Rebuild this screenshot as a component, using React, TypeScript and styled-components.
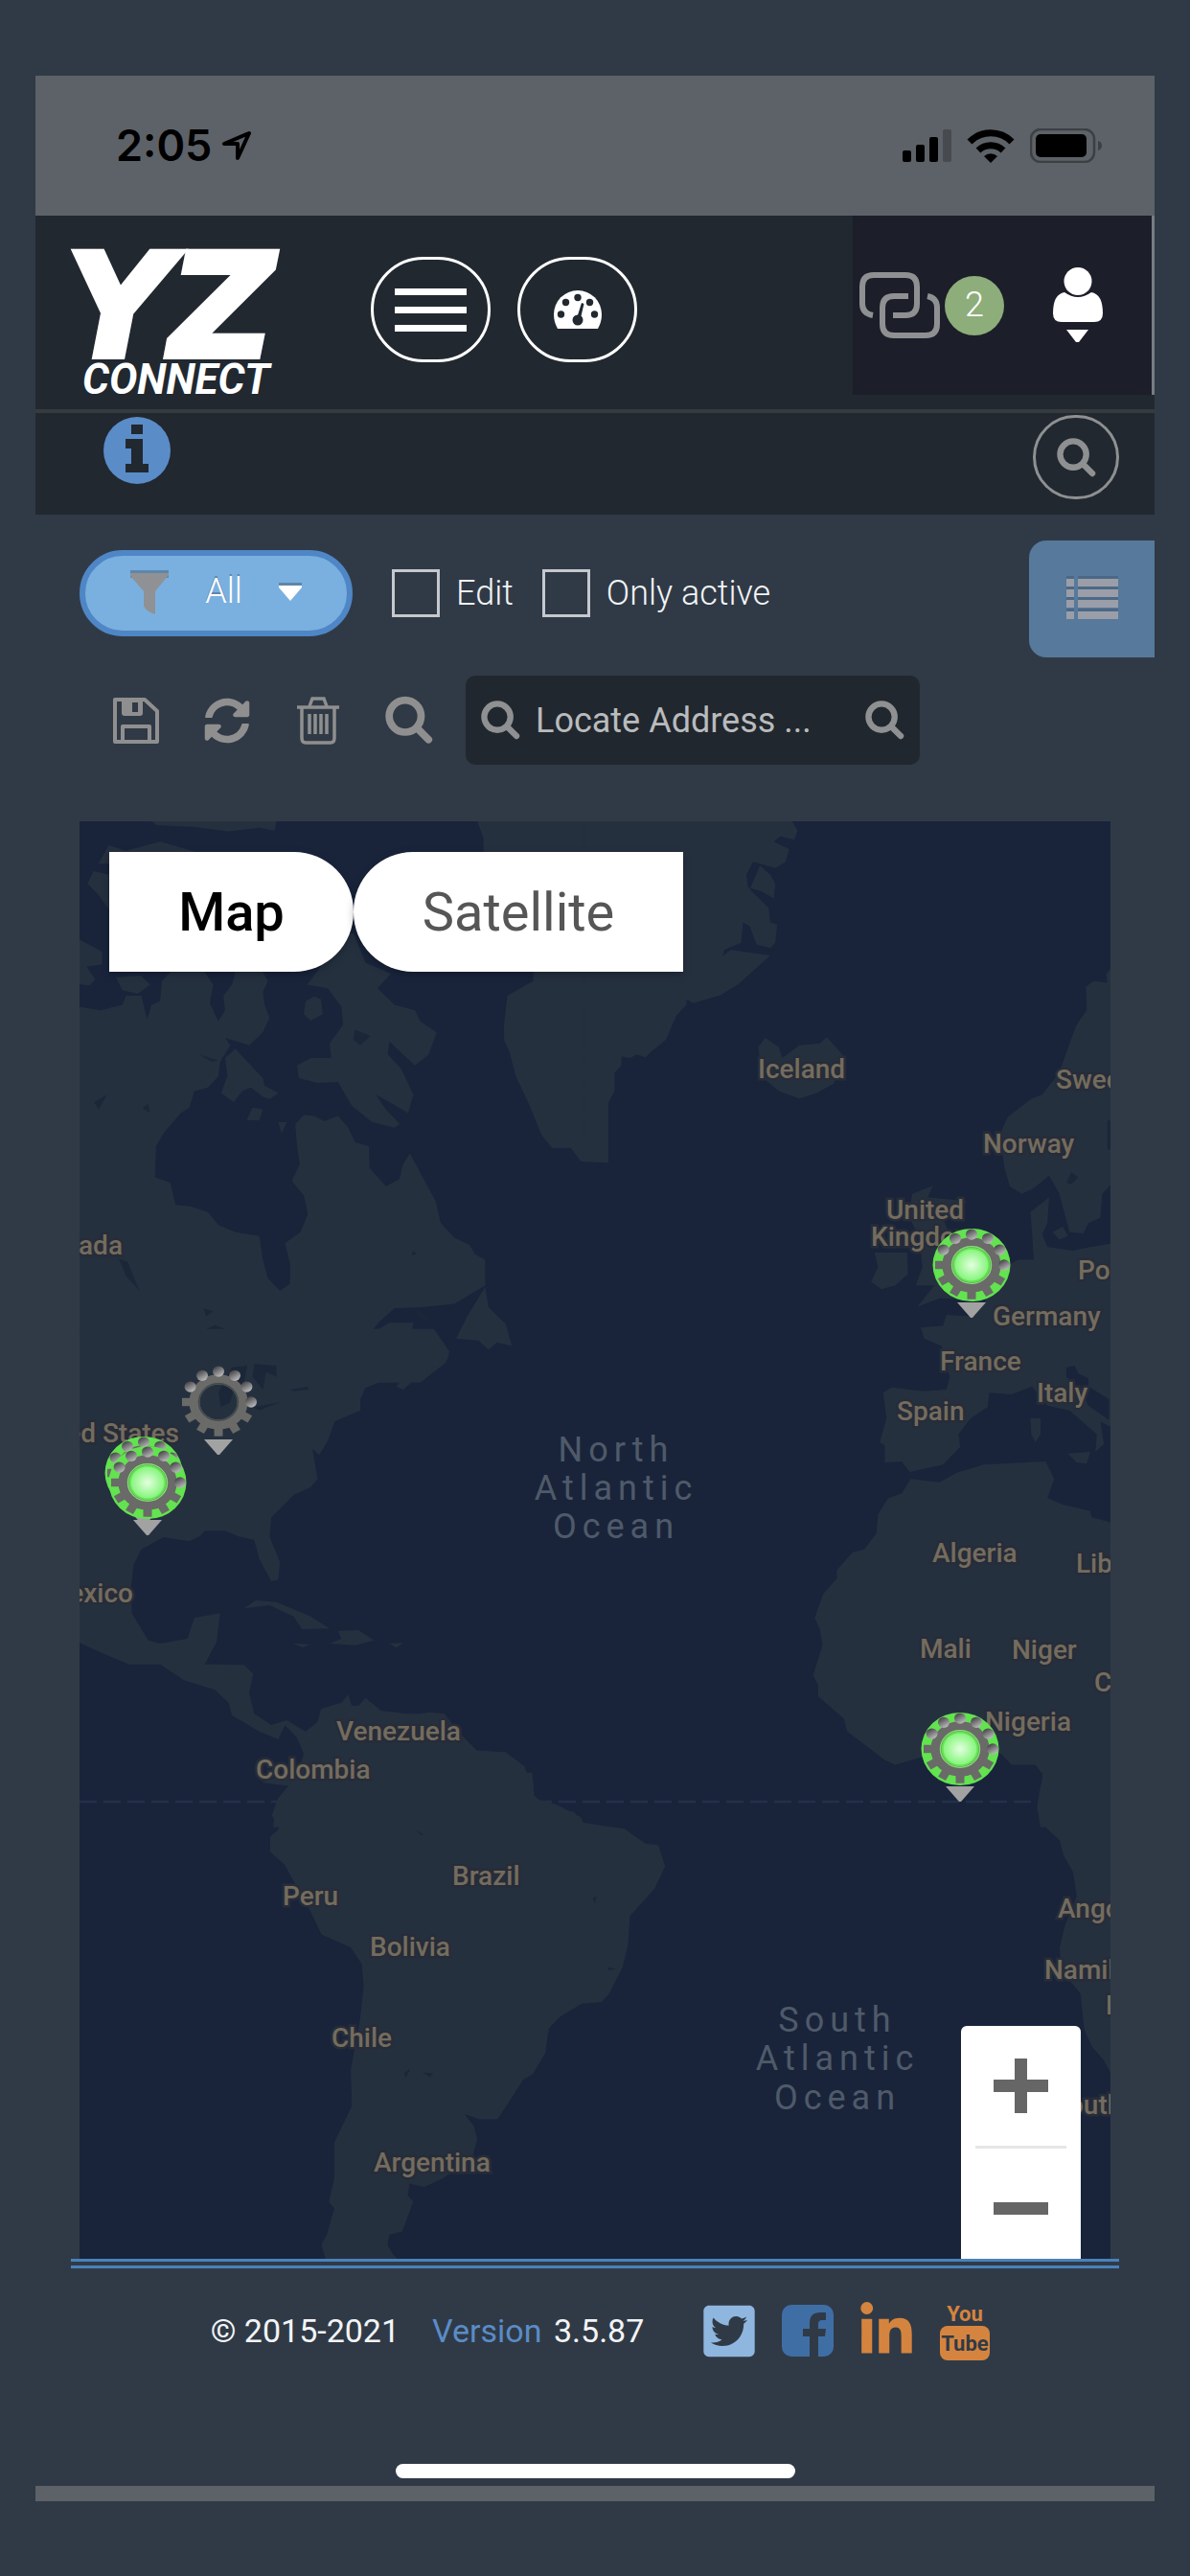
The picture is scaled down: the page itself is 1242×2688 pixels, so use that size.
import React from "react";
import styled, { createGlobalStyle } from "styled-components";
import { FaSyncAlt, FaTwitterSquare, FaLinkedinIn } from "react-icons/fa";

const color = {
  page: "#303a46",
  status: "#5d6268",
  bar: "#212830",
  account: "#1c1e29",
  muted: "#8e9092",
  water: "#19243b",
  land: "#25303f",
  label: "#746c5d",
  blue: "#4f86c6",
};

const GlobalStyle = createGlobalStyle`
  * { box-sizing: border-box; }
  body { margin: 0; background: ${color.page}; }
  button, input, select { font: inherit; color: inherit; }
  svg { display: block; }
`;

const Page = styled.div`
  min-height: 100vh;
  padding: 79px 37px 78px;
  background: ${color.page};
  color: #f2f4f6;
  font-family: Roboto, "Liberation Sans", sans-serif;
  font-weight: 300;
  font-size: 36px;
  line-height: 42px;
`;

const PlainButton = styled.button`
  display: flex;
  align-items: center;
  justify-content: center;
  flex: none;
  padding: 0;
  border: 0;
  background: none;
  cursor: pointer;
`;

/* Phone status bar */
const StatusBar = styled.div`
  display: flex;
  align-items: center;
  height: 146px;
  padding: 0 54px 0 84px;
  background: ${color.status};
  color: #000;
`;

const Clock = styled.time`
  font-family: Inter, sans-serif;
  font-weight: 600;
  font-size: 45px;
  line-height: 56px;
  margin-right: 10px;
`;

const StatusIcons = styled.div`
  display: flex;
  align-items: center;
  gap: 16px;
  margin-left: auto;
`;

/* Header */
const Header = styled.header`
  display: flex;
  align-items: center;
  height: 206px;
  padding: 0 0 6px 29px;
  background: ${color.bar};
  border-bottom: 4px solid #363b3d;
`;

const LogoLink = styled.a`
  margin-right: 80px;
`;

const LogoSvg = styled.svg`
  overflow: visible;
`;

const Nav = styled.nav`
  display: flex;
  gap: 28px;
`;

const RoundButton = styled(PlainButton)`
  width: 125px;
  height: 110px;
  border: 3px solid #fff;
  border-radius: 55px;
  color: #fff;
`;

const Account = styled.div`
  display: flex;
  align-items: center;
  align-self: flex-start;
  height: 187px;
  margin-left: auto;
  padding: 0 51px 0 7px;
  background: ${color.account};
  border-right: 3px solid #777c82;
`;

const LinksButton = styled(PlainButton)`
  gap: 4px;
  margin-right: 51px;
`;

const Badge = styled.span`
  width: 62px;
  height: 62px;
  border-radius: 31px;
  background: #8dad7a;
  color: #fff;
  line-height: 60px;
  text-align: center;
`;

const SubBar = styled.div`
  display: flex;
  justify-content: space-between;
  align-items: flex-start;
  height: 106px;
  padding: 2px 37px 0 71px;
  background: ${color.bar};
`;

const CircleButton = styled(PlainButton)`
  width: 90px;
  height: 88px;
  border: 3px solid ${color.muted};
  border-radius: 45px;
  color: ${color.muted};
`;

/* Controls above the map */
const FilterRow = styled.div`
  display: flex;
  align-items: flex-start;
  padding: 27px 0 0 46px;
`;

const Filters = styled.div`
  display: flex;
  align-items: center;
  padding-top: 10px;
`;

const FilterPill = styled.label`
  display: flex;
  align-items: center;
  width: 285px;
  height: 90px;
  margin-right: 41px;
  padding: 0 47px;
  border: 6px solid ${color.blue};
  border-radius: 45px;
  background: #7ab0df;
`;

const FilterSelect = styled.select`
  appearance: none;
  flex: 1;
  min-width: 0;
  padding: 0 0 4px;
  border: 0;
  background: none;
  color: #fff;
  text-align: center;
  text-shadow: 0 -2px 0 #5f86ab;
`;

const Check = styled.label`
  display: flex;
  align-items: center;
  gap: 17px;
  margin-right: 30px;
`;

const Box = styled.input`
  appearance: none;
  width: 50px;
  height: 50px;
  margin: 0;
  border: 3px solid #c5c8cd;
`;

const ListButton = styled(PlainButton)`
  width: 131px;
  height: 122px;
  margin-left: auto;
  border-radius: 18px 0 0 18px;
  background: #57799b;
`;

const ToolRow = styled.div`
  display: flex;
  align-items: center;
  padding: 19px 46px 0 80px;
`;

const Tools = styled.div`
  display: flex;
  gap: 45px;
  margin-right: 34px;
  color: #8f8f8f;
`;

const ToolButton = styled(PlainButton)`
  width: 50px;
  height: 52px;
`;

const AddressBox = styled.form`
  display: flex;
  align-items: center;
  width: 474px;
  height: 93px;
  padding: 0 16px;
  border-radius: 10px;
  background: #21272e;
  color: ${color.muted};
`;

const AddressInput = styled.input`
  flex: 1;
  min-width: 0;
  padding: 0 0 0 16px;
  border: 0;
  background: none;
  color: #b9bbbd;
  font-weight: 400;
  &::placeholder { color: #b9bbbd; opacity: 1; }
`;

/* Map */
const MapFrame = styled.main`
  position: relative;
  overflow: hidden;
  aspect-ratio: 1076 / 1500;
  margin: 59px 46px 0;
  background: ${color.water};
`;

const MapSvg = styled.svg`
  width: 100%;
  height: 100%;
`;

const MapTypes = styled.div`
  position: absolute;
  top: 32px;
  left: 31px;
  display: flex;
`;

const MapType = styled.button<{ $active?: boolean }>`
  width: ${(p) => (p.$active ? "255px" : "344px")};
  height: 125px;
  padding: 0;
  border: 0;
  border-radius: ${(p) => (p.$active ? "0 62px 62px 0" : "62px 0 0 62px")};
  background: #fff;
  box-shadow: 0 3px 8px rgba(0, 0, 0, 0.25);
  color: ${(p) => (p.$active ? "#000" : "#565656")};
  font-size: 56px;
  font-weight: ${(p) => (p.$active ? 500 : 400)};
`;

const ZoomPanel = styled.div`
  position: absolute;
  right: 31px;
  bottom: -10px;
  width: 125px;
  border-radius: 6px;
  background: #fff;
`;

const ZoomButton = styled(PlainButton)`
  width: 100%;
  height: 125px;
  color: #666;
`;

const ZoomDivider = styled.div`
  height: 3px;
  margin: 0 15px;
  background: #e6e6e6;
`;

const CountryLabel = styled.text`
  font-size: 28px;
  font-weight: 500;
  fill: ${color.label};
  stroke: #272c39;
  stroke-width: 5px;
  paint-order: stroke;
`;

const OceanLabel = styled.text`
  font-size: 36px;
  font-weight: 400;
  letter-spacing: 6px;
  fill: #4f5a69;
  text-anchor: middle;
`;

/* Footer */
const Footer = styled.footer`
  display: flex;
  justify-content: center;
  align-items: center;
  height: 140px;
  margin: 0 37px;
  padding-left: 12px;
  border-top: 10px double #4a82bb;
  font-size: 34px;
  font-weight: 400;
`;

const Copyright = styled.span`
  margin-right: 34px;
`;

const Version = styled.span`
  margin-right: 62px;
  b { font-weight: 400; color: #5a8cc8; margin-right: 4px; }
`;

const Social = styled.div`
  display: flex;
  align-items: center;
  gap: 28px;
`;

const SocialLink = styled.a<{ $tint: string }>`
  display: flex;
  justify-content: center;
  width: 54px;
  color: ${(p) => p.$tint};
`;

const HomeBar = styled.div`
  width: 417px;
  height: 15px;
  margin: 74px auto 8px;
  border-radius: 8px;
  background: #fff;
`;

const BottomStrip = styled.div`
  height: 16px;
  background: ${color.status};
`;

function SearchIcon({ size = 41 }: { size?: number }) {
  return (
    <svg width={size} height={size} viewBox="0 0 42 42" fill="none" stroke="currentColor" aria-hidden="true">
      <ellipse cx="17.5" cy="17.5" rx="14" ry="14" strokeWidth="6.5" />
      <path d="M28 28 38 38" strokeWidth="6.5" strokeLinecap="round" />
    </svg>
  );
}

function Logo() {
  return (
    <LogoSvg width="241" height="180" viewBox="66 233 241 180" fill="#fff" role="img" aria-label="YZ Connect">
      <text x="69" y="372" fontFamily="'DejaVu Sans', sans-serif" fontWeight="700" fontStyle="oblique" fontSize="150" stroke="#fff" strokeWidth="6">YZ</text>
      <text x="86" y="411" fontFamily="Roboto, sans-serif" fontWeight="700" fontStyle="italic" fontSize="44">CONNECT</text>
    </LogoSvg>
  );
}

function Pin({ x, y, active = false }: { x: number; y: number; active?: boolean }) {
  const teeth = [30, 60, 90, 120, 150, 180];
  const beads = [210, 240, 270, 300, 330, 360];
  return (
    <g transform={`translate(${x} ${y})`}>
      <g transform="scale(1 .94)">
        {active && <circle r="40.5" fill="#62e34f" />}
        <circle r="25" fill="none" stroke="#6a6a68" strokeWidth="11" />
        {teeth.map((a) => (
          <rect key={a} x="27" y="-4.5" width="11" height="9" fill="#6a6a68" transform={`rotate(${a})`} />
        ))}
        {beads.map((a) => (
          <circle
            key={a}
            cx={34 * Math.cos((a * Math.PI) / 180)}
            cy={34 * Math.sin((a * Math.PI) / 180)}
            r="6"
            fill="url(#bead)"
          />
        ))}
        <circle r="20.5" fill="none" stroke={active ? "#7fe070" : "#3e4a4a"} strokeWidth="1.5" />
        {active && <circle r="17.5" fill="url(#lamp)" />}
      </g>
      <path d="M-15 39H15L1 55H-1Z" fill="#a2a2a2" />
    </g>
  );
}

const countries: [string, number, number][] = [
  ["Iceland", 791, 1125], ["Sweden", 1102, 1136], ["Norway", 1026, 1203], ["United", 925, 1272],
  ["Kingdom", 909, 1300], ["Poland", 1125, 1335], ["Germany", 1036, 1383], ["France", 981, 1430],
  ["Italy", 1082, 1463], ["Spain", 936, 1482], ["Algeria", 973, 1630], ["Libya", 1123, 1641],
  ["Mali", 960, 1730], ["Niger", 1056, 1731], ["Chad", 1142, 1765], ["Nigeria", 1028, 1806],
  ["Venezuela", 351, 1816], ["Colombia", 267, 1856], ["Peru", 295, 1988], ["Brazil", 472, 1967],
  ["Bolivia", 386, 2041], ["Chile", 346, 2136], ["Argentina", 390, 2266], ["Angola", 1104, 2001],
  ["Namibia", 1090, 2065], ["Botswana", 1154, 2102], ["South", 1098, 2206],
];

const edgeCountries: [string, number, number][] = [
  ["Canada", 128, 1309], ["United States", 187, 1505], ["Mexico", 139, 1672],
];

function WorldMap() {
  return (
    <MapSvg viewBox="83 857 1076 1500" preserveAspectRatio="xMidYMid slice" role="img" aria-label="World map">
      <defs>
        <linearGradient id="bead" x1="0" y1="0" x2=".6" y2="1">
          <stop offset=".2" stopColor="#4c4c4e" />
          <stop offset="1" stopColor="#b8b8ba" />
        </linearGradient>
        <radialGradient id="lamp">
          <stop offset="0" stopColor="#e4ffe0" />
          <stop offset="1" stopColor="#86f57c" />
        </radialGradient>
      </defs>
      <path d="M83 1880H1090" stroke="#24304a" strokeWidth="2.5" strokeDasharray="18 7" />
      <g fill={color.land}>
        {/* North America, Arctic islands */}
        <g transform="translate(60 840) scale(.3571 .3827)">
          <path d="M60 550 125 560 190 545 200 520 245 520 262 585 275 545 300 535 305 480 330 455 430 455 455 490 445 540 470 590 490 560 485 520 510 490 520 455 600 455 615 480 600 510 605 545 620 580 600 620 560 655 490 635 505 655 475 700 470 740 440 770 400 780 385 825 360 840 310 895 288 930 285 1015 330 1030 345 1090 390 1095 440 1110 470 1145 520 1165 590 1175 600 1240 615 1290 650 1325 680 1305 680 1250 665 1195 710 1165 732 1115 720 1065 685 1025 708 980 700 930 695 870 720 845 750 848 780 862 820 848 850 880 870 920 910 930 912 990 960 1040 1000 1020 1010 980 1030 950 1070 1020 1105 1080 1120 1140 1160 1180 1205 1200 1220 1225 1250 1240 1250 1310 1160 1360 1060 1370 985 1372 940 1410 910 1445 970 1412 1040 1412 1025 1480 1035 1520 1080 1510 1140 1490 1135 1520 1060 1575H60Z" />
          <path d="M1250 1315 1260 1370 1310 1415 1328 1475 1285 1465 1260 1485 1230 1460 1165 1455 1200 1390Z" />
          <path d="M730 490 770 440 800 350 865 350 900 430 975 460 935 500 985 545 1045 560 1060 590 1108 620 1085 680 1045 710 1010 680 970 645 965 680 1005 720 1040 790 1025 840 980 815 930 790 960 830 1000 870 985 880 920 865 860 820 820 755 760 758 705 745 700 710 740 690 800 690 795 650 835 600 830 550 790 500Z" />
          <path d="M520 665 560 705 600 745 605 765 645 785 620 802 600 795 565 770 540 780 515 810 478 785 497 740 490 690ZM570 825 600 830 590 860 553 860ZM725 535 750 522 770 530 775 570 740 588 720 570ZM645 865 670 865 655 895Z" />
          <path d="M270 40H640L635 70 590 62 500 72 400 60 290 55ZM60 365 130 400 130 435 85 440 110 475 95 492 60 488ZM170 470 245 465 270 490 235 515 190 505ZM88 215 105 180 150 190V285L120 245ZM120 160 150 110 200 125 300 100 400 127V160Z" />
          <path d="M1225 40H1610V975L1530 972 1500 935 1445 935 1415 900 1380 820 1340 740 1320 670 1305 640 1305 600 1315 520 1390 480 1400 300 1245 127 1245 90Z" />
          <g fill="#1b2738">
            <path d="M365 1475 410 1440 460 1418 520 1440 535 1480 490 1497 430 1470ZM500 1525 560 1515 640 1530 640 1568H590L575 1530ZM180 1238 205 1245 240 1325 200 1285ZM107 810 145 790 120 830ZM868 612 915 630 885 655 865 640ZM427 1372 455 1380 435 1395ZM1040 1370 1100 1408 1060 1400ZM1040 1215 1050 1225 1035 1228ZM248 825 265 815 270 840ZM415 680 470 697 450 700Z" />
          </g>
        </g>
        {/* Greenland coast, Iceland, Northern Europe */}
        <g transform="translate(620 840) scale(.3571 .3827)">
          <path d="M-30 40H575L595 70 585 95 545 85 525 100 570 120 560 155 530 172 465 155 445 190 450 225 490 235 525 255 530 215 515 190 485 165 455 230 510 280 515 320 535 325 530 375 515 390 475 380 455 330 435 320 430 375 380 395 375 412 400 395 515 410 420 490 370 518 290 540 270 530V545L240 575 210 640 170 670 150 688 125 680 105 690 80 685 80 710 60 730 60 780 20 850 15 905 0 945-30 970Z" />
          <path d="M480 660 500 635 540 660 550 690 600 655 660 650 680 633 735 690 700 760 650 785 600 800 540 780 490 740Z" />
          <path d="M1515 440 1497 460 1500 485 1460 480 1438 495 1440 560 1410 600 1390 650 1360 730 1310 790 1280 800 1210 850 1185 900 1200 990 1215 1040 1250 1060 1285 1045 1330 1010 1360 1060 1390 1165 1430 1168 1445 1140 1480 1125 1485 1060 1515 1030Z" />
          <path d="M1275 1110 1330 1070 1325 1140 1310 1170 1325 1205 1400 1215 1450 1205 1515 1195V1575H1050L1015 1475 965 1455 955 1425 1020 1420 1030 1390 1110 1395 1160 1330 1200 1260 1240 1240 1285 1240 1280 1160ZM1340 1165 1370 1150 1385 1175 1360 1185Z" />
          <path d="M930 1060 990 1038 975 1070 1090 1080 1020 1130 1050 1190 1100 1230 1140 1300 1100 1350 1010 1345 945 1368 995 1310 940 1310 960 1260 950 1180 920 1120ZM820 1220H915L917 1280 880 1310 840 1320 810 1300 830 1260Z" />
          <path fill="#1b2738" d="M1395 1000 1415 1015 1395 1035 1380 1030ZM1500 860H1515V940H1500Z" />
        </g>
        {/* United States to northern South America */}
        <g transform="translate(60 1400) scale(.3571 .3333)">
          <path d="M60-40H1100L1145 30 1140 55 1060 105 1010 150 990 140 1035 85 900 145 885 180 885 215 810 250 790 310 765 355 745 335 760 430 740 455 690 480 625 550 620 610 650 690 645 745 625 750 590 680 575 620 530 610 490 592 430 592 415 610 385 625 310 612 245 650 222 700 215 770 217 850 265 935 300 945 380 930 400 865 475 850 465 940 430 1010 545 1012 572 1040 560 1100 575 1165 625 1200 670 1185 725 1220 760 1190 770 1150 830 1130 850 1105 860 1140 880 1140 900 1115 945 1155 1020 1165 1060 1165 1085 1160 1130 1165 1180 1230 1225 1280 1310 1285 1365 1330 1395 1430 1460 1450 1530 1490 1540 1520H630L640 1450 690 1390 720 1290 700 1240 665 1200 645 1245 590 1220 510 1170 500 1130 460 1090 370 1060 300 1010 210 1010 130 975 60 940Z" />
          <path d="M545 835 580 810 640 815 740 860 795 898 715 900 690 860 620 825ZM820 905 880 903 925 935 870 950 795 945 830 930ZM970 945 1010 943 990 958ZM690 945 740 948 715 957Z" />
          <path fill="#1b2738" d="M510 80 555 75 545 130 515 150 505 190 478 205 470 160ZM575 70 640 75 640 110 610 95 600 150 570 110ZM570 205 650 190 590 215ZM680 150 730 140 735 150 690 155Z" />
        </g>
        {/* Southern Europe and Africa */}
        <g transform="translate(620 1400) scale(.3571 .3333)">
          <path d="M1010-30 1025 60 1040 110 1030 150 960 155 870 143 845 160 855 240 835 315 850 325V378L900 375 922 408 1020 385 1070 330 1065 290 1100 240 1150 205 1155 160 1220 165 1280 140 1325 200 1390 215 1470 290 1465 345 1490 320 1480 250 1515 270V-30ZM1275 240 1305 240 1305 290 1290 315 1278 290ZM1385 350 1450 345 1440 382 1410 378Z" />
          <path fill={color.water} d="M1380 80 1405 75 1415 100 1445 115V140L1505 180V245L1445 200 1420 150 1380 110Z" />
          <path d="M925 430 1010 440 1060 410 1140 385 1320 375 1345 430 1325 490 1370 510 1450 530 1455 550 1515 567V1520H1305L1295 1460 1305 1390 1315 1360 1290 1325 1220 1325 1190 1290 960 1300 880 1325 850 1310 740 1220 730 1180 655 1110 655 1075 640 1045 668 950 660 900 645 865 670 790 710 740 710 715 755 660 790 650 825 600 830 540 860 490 900 475Z" />
        </g>
        {/* South America */}
        <g transform="translate(60 1860) scale(.3827 .3444)">
          <path d="M640-30 555 0 630 10 600 50 585 100 605 140 580 165 580 210 620 250 640 290 690 390 720 460 800 500 830 550 835 620 825 720 800 870 803 980 755 1090 755 1200 740 1270 755 1290 735 1370 720 1400 735 1460H945L915 1430 900 1400 905 1370 940 1360 970 1270 955 1250 960 1215 1000 1225 1050 1200 1130 1140 1145 1080 1135 1040 1110 1005 1150 1020 1200 1020 1230 970 1270 900 1295 885 1330 820 1340 745 1370 710 1430 670 1484 665 1504 640 1541 560 1556 490 1561 405 1629 320 1657 255 1639 190 1603 185 1546 140 1480 130 1425 120 1410 90 1330 70 1300 40 1295-30Z" />
          <path fill="#1b2738" d="M980 145 1002 160 990 158ZM945 880 962 868 950 895ZM995 878 1025 882 1015 893ZM1500 560 1525 565 1505 570ZM1460 350 1470 345 1465 368Z" />
        </g>
        {/* Southern Africa */}
        <g transform="translate(620 1860) scale(.3967 .3444)">
          <path d="M1180-30 1175 60 1173 120 1225 175 1235 220 1260 270 1270 345 1240 430 1225 500 1230 570 1280 640 1290 750 1310 800 1340 840 1370 900V-30Z" />
        </g>
      </g>
      {countries.map(([name, x, y]) => (
        <CountryLabel key={name} x={x} y={y}>{name}</CountryLabel>
      ))}
      {edgeCountries.map(([name, x, y]) => (
        <CountryLabel key={name} x={x} y={y} textAnchor="end">{name}</CountryLabel>
      ))}
      <OceanLabel>
        <tspan x="643" y="1525">North</tspan>
        <tspan x="643" y="1565">Atlantic</tspan>
        <tspan x="643" y="1605">Ocean</tspan>
      </OceanLabel>
      <OceanLabel>
        <tspan x="874" y="2120">South</tspan>
        <tspan x="874" y="2160">Atlantic</tspan>
        <tspan x="874" y="2201">Ocean</tspan>
      </OceanLabel>
      <Pin x={228} y={1463} />
      <Pin x={150} y={1537} active />
      <Pin x={154} y={1547} active />
      <Pin x={1014} y={1320} active />
      <Pin x={1002} y={1825} active />
    </MapSvg>
  );
}

export default function App() {
  return (
    <Page>
      <GlobalStyle />
      <StatusBar>
        <Clock>2:05</Clock>
        <svg width="32" height="32" viewBox="0 0 32 32" fill="none" stroke="#000" strokeWidth="4" strokeLinejoin="round" aria-hidden="true">
          <path d="M29 3 3 14H17V29Z" />
        </svg>
        <StatusIcons>
          <svg width="51" height="36" viewBox="0 0 51 36" aria-hidden="true">
            <rect y="23" width="9" height="12" rx="2" />
            <rect x="14" y="17" width="9" height="18" rx="2" />
            <rect x="28" y="9" width="9" height="26" rx="2" />
            <rect x="42" y="1" width="9" height="34" rx="2" fill="#474b4f" />
          </svg>
          <svg width="50" height="36" viewBox="0 0 50 36" fill="none" stroke="#000" strokeWidth="7" aria-hidden="true">
            <path d="M3 14A31 31 0 0 1 47 14M12 23A19 19 0 0 1 38 23" />
            <path d="M18 29A10 10 0 0 1 32 29L25 36Z" fill="#000" stroke="none" />
          </svg>
          <svg width="76" height="36" viewBox="0 0 76 36" aria-hidden="true">
            <rect x="1" y="1" width="66" height="34" rx="10" fill="none" stroke="#3c4043" strokeWidth="2.5" />
            <rect x="6" y="6" width="53" height="24" rx="5" />
            <path d="M71 13Q75 14 75 18T71 23Z" fill="#3c4043" />
          </svg>
        </StatusIcons>
      </StatusBar>

      <Header>
        <LogoLink href="#home"><Logo /></LogoLink>
        <Nav>
          <RoundButton aria-label="Menu">
            <svg width="75" height="45" viewBox="0 0 75 45" fill="#fff" aria-hidden="true">
              <path d="M0 0H75V7H0ZM0 19H75V26H0ZM0 38H75V45H0Z" />
            </svg>
          </RoundButton>
          <RoundButton aria-label="Dashboard">
            <svg width="50" height="40" viewBox="0 0 50 40" aria-hidden="true">
              <path d="M25 0A25 25 0 0 1 50 25Q50 33 46 40H4Q0 33 0 25A25 25 0 0 1 25 0Z" fill="#fff" />
              <g fill={color.bar}>
                <circle cx="25" cy="7.5" r="3.7" />
                <circle cx="12.5" cy="12.5" r="3.7" />
                <circle cx="37.5" cy="12.5" r="3.7" />
                <circle cx="7.5" cy="25" r="3.7" />
                <circle cx="42.5" cy="25" r="3.7" />
                <circle cx="25" cy="31" r="5.5" />
                <path d="M29 13 31.500 14 28 29H24Z" />
              </g>
            </svg>
          </RoundButton>
        </Nav>
        <Account>
          <LinksButton aria-label="Connections">
            <svg width="85" height="70" viewBox="0 0 85 70" fill="none" stroke={color.muted} strokeWidth="6" aria-hidden="true">
              <path d="M14 45Q3 43 3 33V15Q3 3 15 3H48Q60 3 60 15V33Q60 45 48 45H35" />
              <path d="M51 25H36Q24 25 24 37V54Q24 66 36 66H69Q81 66 81 54V37Q81 27 71 25" />
            </svg>
            <Badge>2</Badge>
          </LinksButton>
          <PlainButton aria-label="Account menu">
            <svg width="52" height="80" viewBox="0 0 52 80" fill="#fff" aria-hidden="true">
              <ellipse cx="26" cy="14.500" rx="14.500" ry="14.500" />
              <path d="M12 26Q26 36 40 26Q52 28 52 48Q52 57 43 57H9Q0 57 0 48Q0 28 12 26ZM14 65H37L27 78H24Z" />
            </svg>
          </PlainButton>
        </Account>
      </Header>

      <SubBar>
        <PlainButton aria-label="Information">
          <svg width="70" height="72" viewBox="0 0 70 72" aria-hidden="true">
            <circle cx="35" cy="37" r="35" fill="#5a8cc8" />
            <path d="M29 10H41V20H29ZM23 25H41V51H47V60H23V51H29V35H23Z" fill={color.bar} />
          </svg>
        </PlainButton>
        <CircleButton aria-label="Search"><SearchIcon /></CircleButton>
      </SubBar>

      <FilterRow>
        <Filters>
          <FilterPill>
            <svg width="40" height="48" viewBox="0 0 40 48" aria-hidden="true">
              <path d="M0 0H40V8H0Z" fill="#5f86ab" />
              <path d="M0 3H40V5L26 22V46Q16 43 14 37V22L0 6Z" fill="#8f9194" />
            </svg>
            <FilterSelect aria-label="Filter" defaultValue="All">
              <option>All</option>
            </FilterSelect>
            <svg width="24" height="22" viewBox="0 0 24 22" aria-hidden="true">
              <path d="M0 0H24V5H0Z" fill="#5f86ab" />
              <path d="M0 3H24V5L12 19 0 5Z" fill="#fff" />
            </svg>
          </FilterPill>
          <Check><Box type="checkbox" />Edit</Check>
          <Check><Box type="checkbox" />Only active</Check>
        </Filters>
        <ListButton aria-label="List view">
          <svg width="54" height="48" viewBox="0 0 54 48" aria-hidden="true">
            {[0, 11, 22, 34].map((y) => (
              <g key={y}>
                <path d={`M0 ${y}H8V${y + 4}H0ZM12 ${y}H54V${y + 4}H12Z`} fill="#4b6986" />
                <path d={`M0 ${y + 3}H8V${y + 11}H0ZM12 ${y + 3}H54V${y + 11}H12Z`} fill="#9b9ea8" />
              </g>
            ))}
          </svg>
        </ListButton>
      </FilterRow>

      <ToolRow>
        <Tools>
          <ToolButton aria-label="Save">
            <svg width="50" height="50" viewBox="0 0 50 50" fill="none" stroke="currentColor" strokeWidth="4" strokeLinejoin="round" aria-hidden="true">
              <path d="M3 3H34L47 15V47H3ZM11 47V31H39V47" />
              <path d="M10 3H32V17Q32 20 29 20H13Q10 20 10 17ZM21 6V16H27V6Z" fill="currentColor" fillRule="evenodd" stroke="none" />
            </svg>
          </ToolButton>
          <ToolButton aria-label="Refresh"><FaSyncAlt size={48} /></ToolButton>
          <ToolButton aria-label="Delete">
            <svg width="46" height="50" viewBox="0 0 46 50" fill="none" stroke="currentColor" strokeWidth="3.500" aria-hidden="true">
              <path d="M1 11H45M6 11V43Q6 48 10 48H36Q40 48 40 43V11M14 10 17 2H29L32 10M14 18V39M20 18V39M26 18V39M32 18V39" />
            </svg>
          </ToolButton>
          <ToolButton aria-label="Find"><SearchIcon size={53} /></ToolButton>
        </Tools>
        <AddressBox onSubmit={(e) => e.preventDefault()}>
          <SearchIcon />
          <AddressInput aria-label="Locate Address" placeholder="Locate Address ..." />
          <PlainButton type="submit" aria-label="Locate"><SearchIcon /></PlainButton>
        </AddressBox>
      </ToolRow>

      <MapFrame>
        <WorldMap />
        <MapTypes>
          <MapType $active>Map</MapType>
          <MapType>Satellite</MapType>
        </MapTypes>
        <ZoomPanel>
          <ZoomButton aria-label="Zoom in">
            <svg width="57" height="57" viewBox="0 0 57 57" fill="currentColor" aria-hidden="true">
              <path d="M22 0H35V22H57V35H35V57H22V35H0V22H22Z" />
            </svg>
          </ZoomButton>
          <ZoomDivider />
          <ZoomButton aria-label="Zoom out">
            <svg width="57" height="13" viewBox="0 0 57 13" fill="currentColor" aria-hidden="true">
              <path d="M0 0H57V13H0Z" />
            </svg>
          </ZoomButton>
        </ZoomPanel>
      </MapFrame>

      <Footer>
        <Copyright>© 2015-2021</Copyright>
        <Version><b>Version</b> 3.5.87</Version>
        <Social>
          <SocialLink href="#twitter" aria-label="Twitter" $tint="#8fb6df"><FaTwitterSquare size={61} /></SocialLink>
          <SocialLink href="#facebook" aria-label="Facebook" $tint="#3f6ea5">
            <svg width="54" height="54" viewBox="0 0 54 54" aria-hidden="true">
              <rect width="54" height="54" rx="10" fill="currentColor" />
              <path d="M29 54V33H22V25H29V19Q29 8 40 8H46V16H42Q38 16 38 20V25H46L45 33H38V54Z" fill={color.page} />
            </svg>
          </SocialLink>
          <SocialLink href="#linkedin" aria-label="LinkedIn" $tint="#d5843f"><FaLinkedinIn size={61} /></SocialLink>
          <SocialLink href="#youtube" aria-label="YouTube" $tint="#d5843f">
            <svg width="52" height="64" viewBox="0 0 52 64" fontFamily="Roboto, sans-serif" fontWeight="700" textAnchor="middle" aria-hidden="true">
              <text x="26" y="22" fontSize="22" fill="currentColor">You</text>
              <rect y="27" width="52" height="36" rx="8" fill="currentColor" />
              <text x="26" y="53" fontSize="22" fill={color.page}>Tube</text>
            </svg>
          </SocialLink>
        </Social>
      </Footer>
      <HomeBar />
      <BottomStrip />
    </Page>
  );
}
